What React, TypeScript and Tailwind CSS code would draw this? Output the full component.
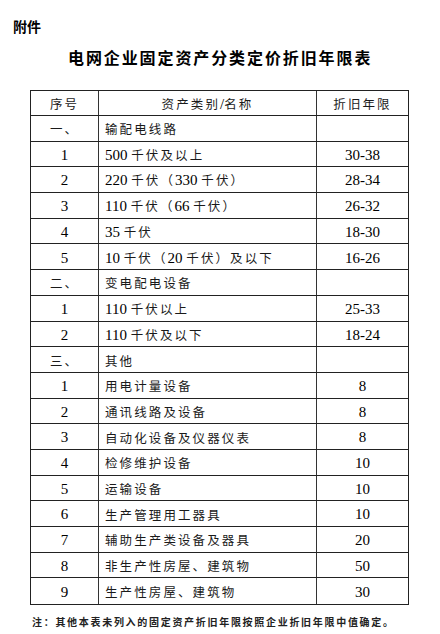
import React from "react";

type Row = { no: string; name: string; years: string; section?: boolean };

const rows: Row[] = [
  { no: "一、", name: "输配电线路", years: "", section: true },
  { no: "1", name: "500 千伏及以上", years: "30-38" },
  { no: "2", name: "220 千伏（330 千伏）", years: "28-34" },
  { no: "3", name: "110 千伏（66 千伏）", years: "26-32" },
  { no: "4", name: "35 千伏", years: "18-30" },
  { no: "5", name: "10 千伏（20 千伏）及以下", years: "16-26" },
  { no: "二、", name: "变电配电设备", years: "", section: true },
  { no: "1", name: "110 千伏以上", years: "25-33" },
  { no: "2", name: "110 千伏及以下", years: "18-24" },
  { no: "三、", name: "其他", years: "", section: true },
  { no: "1", name: "用电计量设备", years: "8" },
  { no: "2", name: "通讯线路及设备", years: "8" },
  { no: "3", name: "自动化设备及仪器仪表", years: "8" },
  { no: "4", name: "检修维护设备", years: "10" },
  { no: "5", name: "运输设备", years: "10" },
  { no: "6", name: "生产管理用工器具", years: "10" },
  { no: "7", name: "辅助生产类设备及器具", years: "20" },
  { no: "8", name: "非生产性房屋、建筑物", years: "50" },
  { no: "9", name: "生产性房屋、建筑物", years: "30" },
];

// mixed text: CJK runs in a small sans with tracking, digits in Times-like serif
function Txt({ s }: { s: string }) {
  const parts = s.split(/([\u3000-\u303f\u4e00-\u9fff\uff00-\uffef]+)/).filter(Boolean);
  return (
    <span className="whitespace-pre">
      {parts.map((p, i) =>
        /[\u3000-\u303f\u4e00-\u9fff\uff00-\uffef]/.test(p) ? (
          <span key={i} className="font-['Noto_Sans_CJK_SC',sans-serif] text-[12.5px] tracking-[2.1px] text-[#1a1a1a]">
            {p}
          </span>
        ) : (
          <span key={i} className="font-['Liberation_Serif',serif] text-[15px] text-black">
            {p}
          </span>
        )
      )}
    </span>
  );
}

export default function App() {
  return (
    <div className="w-[440px] h-[634px] bg-white relative overflow-hidden">
      <div className="pl-[13px] pt-[16px] h-[40px] text-[14px] font-bold leading-[20px] font-['Noto_Sans_CJK_SC',sans-serif] text-black">
        附件
      </div>
      <div className="pl-[68px] pt-[8px] h-[50px] text-[16px] font-bold leading-[18px] tracking-[1.9px] font-['Noto_Sans_CJK_SC',sans-serif] text-black">
        电网企业固定资产分类定价折旧年限表
      </div>

      <div className="ml-[30px] w-[379px] border border-[#222]">
        <div className="flex h-[25px] border-b border-[#222]">
          <div className="w-[68px] border-r border-[#333] flex items-center justify-center"><Txt s="序号" /></div>
          <div className="w-[218px] border-r border-[#333] flex items-center justify-center"><Txt s="资产类别/名称" /></div>
          <div className="flex-1 flex items-center justify-center"><Txt s="折旧年限" /></div>
        </div>
        {rows.map((r, i) => (
          <div key={i} className={"flex h-[25.7px] " + (i < rows.length - 1 ? "border-b border-[#222]" : "")}>
            <div className="w-[68px] border-r border-[#333] flex items-center justify-center"><Txt s={r.no} /></div>
            <div className="w-[218px] border-r border-[#333] flex items-center pl-[6px]"><Txt s={r.name} /></div>
            <div className="flex-1 flex items-center justify-center"><Txt s={r.years} /></div>
          </div>
        ))}
      </div>

      <div className="pl-[32px] mt-[10px] text-[10px] font-bold leading-[14px] tracking-[1.7px] font-['Noto_Sans_CJK_SC',sans-serif] text-[#222] whitespace-nowrap">
        注：其他本表未列入的固定资产折旧年限按照企业折旧年限中值确定。
      </div>
    </div>
  );
}
